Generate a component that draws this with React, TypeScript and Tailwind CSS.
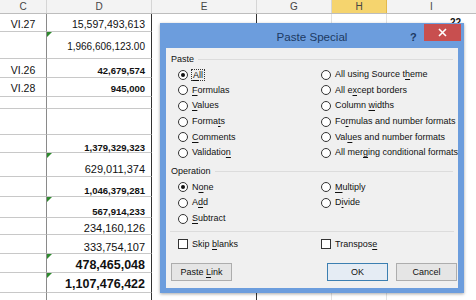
import React from "react";

type Row = {
  h: string;
  c: string;
  d: string;
  dcls: string;
  pb: string;
  tri?: boolean;
  i?: string;
};

const rows: Row[] = [
  { h: "h-[18px]", c: "VI.27", d: "15,597,493,613", dcls: "text-[10.5px]", pb: "pb-[1.5px]", i: "22" },
  { h: "h-[27px]", c: "", d: "1,966,606,123.00", dcls: "text-[10px]", pb: "pb-[6.5px]", tri: true },
  { h: "h-[19px]", c: "VI.26", d: "42,679,574", dcls: "text-[9.5px] font-bold", pb: "pb-[1.5px]" },
  { h: "h-[19px]", c: "VI.28", d: "945,000", dcls: "text-[9.5px] font-bold", pb: "pb-[2.5px]" },
  { h: "h-[12px]", c: "", d: "", dcls: "", pb: "pb-0" },
  { h: "h-[26px]", c: "", d: "", dcls: "", pb: "pb-0" },
  { h: "h-[18px]", c: "", d: "1,379,329,323", dcls: "text-[9.5px] font-bold", pb: "pb-0" },
  { h: "h-[24px]", c: "", d: "629,011,374", dcls: "text-[11px]", pb: "pb-[1.5px]", tri: true },
  { h: "h-[20px]", c: "", d: "1,046,379,281", dcls: "text-[9.5px] font-bold", pb: "pb-[0.5px]" },
  { h: "h-[21px]", c: "", d: "567,914,233", dcls: "text-[9.5px] font-bold", pb: "pb-[0.5px]", tri: true },
  { h: "h-[17px]", c: "", d: "234,160,126", dcls: "text-[11px]", pb: "pb-[0.5px]" },
  { h: "h-[19px]", c: "", d: "333,754,107", dcls: "text-[11px]", pb: "pb-[0.5px]" },
  { h: "h-[19px]", c: "", d: "478,465,048", dcls: "text-[12.5px] font-bold", pb: "pb-[1px]", tri: true },
  { h: "h-[20px]", c: "", d: "1,107,476,422", dcls: "text-[12.5px] font-bold", pb: "pb-[2px]", tri: true },
  { h: "h-[20px]", c: "", d: "", dcls: "", pb: "pb-0" },
];

function Tri() {
  return (
    <svg className="absolute left-0 top-0" width="5" height="5" viewBox="0 0 5 5">
      <polygon points="0,0 5,0 0,5" fill="#2f8a2f" />
    </svg>
  );
}

function U({ t, u }: { t: string; u: number }) {
  return (
    <span className="whitespace-nowrap">
      {t.slice(0, u)}
      <span className="underline underline-offset-[1.5px]">{t.slice(u, u + 1)}</span>
      {t.slice(u + 1)}
    </span>
  );
}

function Radio({ checked }: { checked?: boolean }) {
  return (
    <span className="w-[10px] h-[10px] rounded-full border border-[#333] bg-white flex items-center justify-center shrink-0">
      {checked && <span className="w-[4px] h-[4px] rounded-full bg-[#111]" />}
    </span>
  );
}

function Opt({ t, u, checked, focus }: { t: string; u: number; checked?: boolean; focus?: boolean }) {
  return (
    <div className="flex items-center gap-[4px] h-[15.6px] whitespace-nowrap">
      <Radio checked={checked} />
      <span className={focus ? "border border-dotted border-[#333] leading-[10px] px-[1px] -ml-[1px]" : ""}>
        <U t={t} u={u} />
      </span>
    </div>
  );
}

function Check({ t, u }: { t: string; u: number }) {
  return (
    <div className="flex items-center gap-[4px] h-[14px]">
      <span className="w-[10px] h-[10px] border border-[#333] bg-white shrink-0" />
      <U t={t} u={u} />
    </div>
  );
}

function GroupHead({ t }: { t: string }) {
  return (
    <div className="flex items-center gap-[4px] h-[12px] px-[5px]">
      <span>{t}</span>
      <span className="flex-1 h-px bg-[#dcdcdc]" />
    </div>
  );
}

function Btn({ children, def }: { children: React.ReactNode; def?: boolean }) {
  return (
    <div
      className={
        "h-[18px] w-[61px] flex items-center justify-center border " +
        (def ? "border-[#3c7fb1] bg-[#e5ecf4]" : "border-[#adadad] bg-[#e5e5e5]")
      }
    >
      {children}
    </div>
  );
}

export default function App() {
  return (
    <div className="relative w-[476px] h-[300px] overflow-hidden bg-white font-['Liberation_Sans',Arial,sans-serif] text-[#111]">
      {/* header */}
      <div className="flex h-[14px] bg-[#f3f3f3] border-b border-[#bdbdbd] text-[10px] text-[#444] leading-none">
        <div className="w-[47px] flex items-center justify-center border-r border-[#d5d5d5]">C</div>
        <div className="w-[105px] flex items-center justify-center border-r border-[#d5d5d5]">D</div>
        <div className="w-[105px] flex items-center justify-center border-r border-[#d5d5d5]">E</div>
        <div className="w-[75px] flex items-center justify-center border-r border-[#d5d5d5]">G</div>
        <div className="w-[55px] flex items-center justify-center bg-[#f5d46e] border-r border-[#e3b94a]">H</div>
        <div className="flex-1 flex items-center justify-center">I</div>
      </div>
      {/* rows */}
      <div className="flex flex-col">
        {rows.map((r, idx) => (
          <div key={idx} className={"flex " + r.h}>
            <div className={"w-[47px] flex items-end justify-center border-b border-r border-[#c8c8c8] border-r-[#8a8a8a] text-[10.5px] leading-none " + r.pb}>
              {r.c}
            </div>
            <div className={"relative w-[105px] flex items-end justify-end pr-[6px] border-b border-r border-[#c8c8c8] border-r-[#333] leading-none " + r.dcls + " " + r.pb}>
              {r.tri && <Tri />}
              {r.d}
            </div>
            <div className="w-[105px] border-r border-[#333]" />
            <div className="w-[75px] border-r border-[#e2e2e2]" />
            <div className="w-[55px] border-r border-[#e2e2e2]" />
            <div className="flex-1 flex items-start justify-end pr-[15px] pt-[4px] text-[10px] font-bold leading-none">{r.i}</div>
          </div>
        ))}
      </div>

      {/* dialog */}
      <div className="absolute left-[160px] top-[23px] w-[304px] h-[270px] bg-[#6c9ddd] flex flex-col shadow-[0_1px_3px_rgba(0,0,0,0.35)]">
        <div className="relative h-[25px] flex items-center justify-center pt-[3px]">
          <span className="text-[11.6px] text-[#1d3a63]">Paste Special</span>
          <span className="absolute left-[250px] top-[6px] text-[11px] font-bold text-[#1d3a63]">?</span>
          <div className="absolute left-[264px] top-[1px] w-[37px] h-[17px] bg-[#c84f4f] flex items-center justify-center">
            <svg width="9" height="9" viewBox="0 0 9 9">
              <path d="M1 1 L8 8 M8 1 L1 8" stroke="#fff" strokeWidth="1.6" />
            </svg>
          </div>
        </div>
        <div className="mx-[6px] mb-[5px] flex-1 bg-[#f0f0f0] flex flex-col pt-[5px] text-[9px] leading-none text-[#111]">
          <GroupHead t="Paste" />
          <div className="grid grid-cols-[143px_1fr] pl-[12px] mt-[2px]">
            <Opt t="All" u={0} checked focus />
            <Opt t="All using Source theme" u={18} />
            <Opt t="Formulas" u={0} />
            <Opt t="All except borders" u={5} />
            <Opt t="Values" u={0} />
            <Opt t="Column widths" u={7} />
            <Opt t="Formats" u={5} />
            <Opt t="Formulas and number formats" u={2} />
            <Opt t="Comments" u={0} />
            <Opt t="Values and number formats" u={3} />
            <Opt t="Validation" u={9} />
            <Opt t="All merging conditional formats" u={7} />
          </div>
          <div className="mt-[5px]">
            <GroupHead t="Operation" />
          </div>
          <div className="grid grid-cols-[143px_1fr] pl-[12px] mt-[2px]">
            <Opt t="None" u={1} checked />
            <Opt t="Multiply" u={0} />
            <Opt t="Add" u={1} />
            <Opt t="Divide" u={1} />
            <Opt t="Subtract" u={0} />
          </div>
          <div className="mx-[4px] mt-[5px] h-px bg-[#dcdcdc]" />
          <div className="grid grid-cols-[143px_1fr] pl-[12px] mt-[5px]">
            <Check t="Skip blanks" u={5} />
            <Check t="Transpose" u={8} />
          </div>
          <div className="flex items-center justify-between pl-[5px] pr-[1px] mt-[12px]">
            <Btn>
              <U t="Paste Link" u={6} />
            </Btn>
            <div className="flex gap-[8px]">
              <Btn def>OK</Btn>
              <Btn>Cancel</Btn>
            </div>
          </div>
        </div>
      </div>
    </div>
  );
}
